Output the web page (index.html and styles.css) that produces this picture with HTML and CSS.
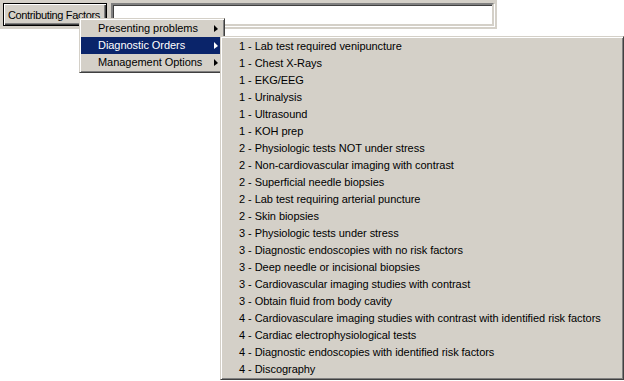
FILE: index.html
```html
<html>

<head>
    <meta charset="utf-8">
    <title>Contributing Factors</title>
    <link rel="stylesheet" href="styles.css">
</head>

<body>
    <div id="toolbar">
        <button id="factorsButton">Contributing Factors</button>
        <input id="factorsText" type="text" value="" />
    </div>

    <!-- first level menu -->
    <div id="mainMenu" class="menu">
        <div class="menuItem">Presenting problems<span class="arrow"></span></div>
        <div class="menuItem selected">Diagnostic Orders<span class="arrow"></span></div>
        <div class="menuItem">Management Options<span class="arrow"></span></div>
    </div>

    <!-- diagnostic orders submenu -->
    <div id="ordersMenu" class="menu">
        <div class="menuItem">1 - Lab test required venipuncture</div>
        <div class="menuItem">1 - Chest X-Rays</div>
        <div class="menuItem">1 - EKG/EEG</div>
        <div class="menuItem">1 - Urinalysis</div>
        <div class="menuItem">1 - Ultrasound</div>
        <div class="menuItem">1 - KOH prep</div>
        <div class="menuItem">2 - Physiologic tests NOT under stress</div>
        <div class="menuItem">2 - Non-cardiovascular imaging with contrast</div>
        <div class="menuItem">2 - Superficial needle biopsies</div>
        <div class="menuItem">2 - Lab test requiring arterial puncture</div>
        <div class="menuItem">2 - Skin biopsies</div>
        <div class="menuItem">3 - Physiologic tests under stress</div>
        <div class="menuItem">3 - Diagnostic endoscopies with no risk factors</div>
        <div class="menuItem">3 - Deep needle or incisional biopsies</div>
        <div class="menuItem">3 - Cardiovascular imaging studies with contrast</div>
        <div class="menuItem">3 - Obtain fluid from body cavity</div>
        <div class="menuItem">4 - Cardiovasculare imaging studies with contrast with identified risk factors</div>
        <div class="menuItem">4 - Cardiac electrophysiological tests</div>
        <div class="menuItem">4 - Diagnostic endoscopies with identified risk factors</div>
        <div class="menuItem">4 - Discography</div>
    </div>
</body>

</html>
```

FILE: styles.css
```css
body {
    margin: 0;
    background: white;
    font-family: "Liberation Sans", Arial, sans-serif;
    font-size: 11px;
    color: black;
}

#toolbar {
    display: flex;
    gap: 4px;
    width: 497px;
    height: 29px;
    padding: 3px;
    box-sizing: border-box;
    background: #d4d0c8;
}

#factorsButton {
    width: 104px;
    height: 23px;
    padding: 0 2px 0 0;
    font-family: inherit;
    font-size: 11px;
    letter-spacing: -0.35px;
    background: #d4d0c8;
    color: black;
    border: 1px solid black;
    box-shadow: inset 1px 1px 0 white, inset -1px -1px 0 #404040, inset -2px -2px 0 #808080;
}

#factorsText {
    width: 383px;
    height: 23px;
    box-sizing: border-box;
    margin: 0;
    border-style: solid;
    border-width: 2px;
    border-color: #808080 #d4d0c8 #d4d0c8 #808080;
    box-shadow: inset 1px 1px 0 #404040, 1px 1px 0 white;
    background: white;
}

.menu {
    position: absolute;
    background: #d4d0c8;
    padding: 1px;
    border-style: solid;
    border-width: 1px;
    border-color: #d4d0c8 #404040 #404040 #d4d0c8;
    box-shadow: inset 1px 1px 0 white, inset -1px -1px 0 #808080;
    letter-spacing: -0.05px;
}

#mainMenu {
    left: 79px;
    top: 18px;
    width: 142px;
}

#ordersMenu {
    left: 220px;
    top: 36px;
    width: 400px;
}

.menuItem {
    position: relative;
    height: 17px;
    line-height: 17px;
    padding-left: 17px;
    white-space: nowrap;
}

.selected {
    background: #0a246a;
    color: white;
}

.arrow {
    position: absolute;
    right: 5px;
    top: 5px;
    width: 0;
    height: 0;
    border-top: 4px solid transparent;
    border-bottom: 3px solid transparent;
    border-left: 4px solid black;
}

.selected .arrow {
    border-left-color: white;
}
```
